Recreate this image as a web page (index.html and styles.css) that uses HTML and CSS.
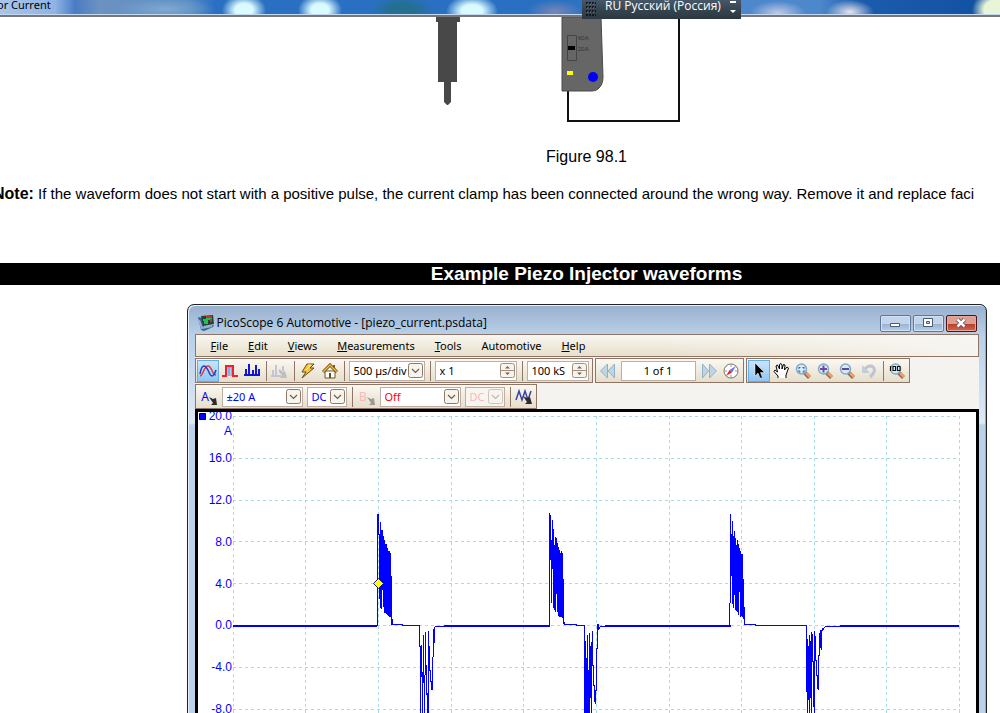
FILE: index.html
```html
<!DOCTYPE html>
<html lang="en">
<head>
<meta charset="utf-8">
<title>Piezo Injector Current</title>
<link rel="stylesheet" href="styles.css">
</head>
<body>
<header class="glass-strip"><span class="strip-title">or Current</span></header>
<div class="lang-bar">
  <svg class="grip" width="10" height="16" viewBox="0 0 10 16"><path d="M0 3h10M0 7h10M0 11h10M0 15h10" stroke="#10161c" stroke-width="2" stroke-dasharray="2 1"/><path d="M1 4h9M1 8h9M1 12h9" stroke="#7c8994" stroke-dasharray="1 2"/></svg>
  <span class="lang-name">RU Русский (Россия)</span>
  <svg width="6" height="16" viewBox="0 0 6 16"><path d="M0 1h6v2H0zM0 10h6l-3 3z" fill="#fff"/></svg>
</div>

<main class="doc">
  <figure class="diagram">
    <svg width="304" height="108" viewBox="435 17 304 108">
      <path d="M436 17h24v5h-3v60h-19V22h-2z" fill="#484848"/>
      <path d="M444 82h7v20l-3 3h-1l-3-3z" fill="#484848"/>
      <path d="M568 88v33h111V17" fill="none" stroke="#111" stroke-width="2"/>
      <path d="M562 17h39l2 60q0 8-5 12-2 2-6 2h-30z" fill="#666" stroke="#4b4b4b"/>
      <path d="M567.500 35.500h9v25h-9z" fill="none" stroke="#444"/>
      <path d="M568 46h7v4h-7z" fill="#000"/>
      <path d="M567 71h6v4h-6z" fill="#ff0"/>
      <circle cx="593" cy="77" r="5" fill="#00f"/>
      <text x="578" y="40" class="tiny">60A</text>
      <text x="578" y="51" class="tiny">20A</text>
    </svg>
    <figcaption>Figure 98.1</figcaption>
  </figure>
  <p class="note"><strong>Note:</strong> If the waveform does not start with a positive pulse, the current clamp has been connected around the wrong way. Remove it and replace faci</p>
  <h2 class="band">Example Piezo Injector waveforms</h2>

  <section class="window">
    <div class="titlebar">
      <svg class="app-icon" width="18" height="16" viewBox="0 0 18 16"><path d="M1 2l4 1 2 9 10-2-1 2-9 4-3-1z" fill="#3c5f88"/><path d="M2 5l3 8 10-2" stroke="#91b1d3" stroke-width="2" fill="none"/><path d="M4 1l12-1 1 9-11 2z" fill="#23413c"/><path d="M6 5h2v3h2V4h4v3" stroke="#23c04f" stroke-width="2" fill="none"/><path d="M9 2h6M14 4v3" stroke="#d32b2b" stroke-width="2"/></svg>
      <span class="caption">PicoScope 6 Automotive - [piezo_current.psdata]</span>
      <button class="win-btn" aria-label="Minimize"><svg width="14" height="10" viewBox="0 0 14 10"><path d="M2.500 5.500h9v3h-9z" fill="#fff" stroke="#4d5a70"/></svg></button>
      <button class="win-btn" aria-label="Restore"><svg width="14" height="10" viewBox="0 0 14 10"><path d="M2.500.5h9v8h-9zM5.500 3.500h3v2h-3z" fill="#fff" stroke="#4d5a70" fill-rule="evenodd"/></svg></button>
      <button class="win-btn close" aria-label="Close"><svg width="14" height="10" viewBox="0 0 14 10"><path d="M3.500 1.500l7 7M10.500 1.500l-7 7" stroke="#534052" stroke-width="4"/><path d="M3.500 1.500l7 7M10.500 1.500l-7 7" stroke="#fff" stroke-width="2.500"/></svg></button>
    </div>

    <nav class="menubar">
      <button><u>F</u>ile</button><button><u>E</u>dit</button><button><u>V</u>iews</button><button><u>M</u>easurements</button><button><u>T</u>ools</button><button>Automotive</button><button><u>H</u>elp</button>
    </nav>

    <div class="bars">
      <div class="bar">
        <button class="tool on" aria-label="Scope mode"><svg width="18" height="16" viewBox="0 0 18 16" fill="none" stroke-width="1.500"><path d="M1 13C4 13 5 3 9 3s4 9 8 9" stroke="#e8323c"/><path d="M1 11C2 5 3 3 5 3c4 0 5 10 8 10 2 0 3-3 4-6" stroke="#2142b5"/></svg></button>
        <button class="tool" aria-label="Persistence mode"><svg width="16" height="16" viewBox="0 0 16 16" fill="none"><path d="M5 3h5v10H5z" fill="#a3ccf2"/><path d="M7 3v10" stroke="#5f8ee0"/><path d="M0 13h4V3h7v10h5" stroke="#f2202a" stroke-width="2"/><path d="M9.500 4v9" stroke="#f58a80"/></svg></button>
        <button class="tool" aria-label="Spectrum mode"><svg width="16" height="16" viewBox="0 0 16 16"><path d="M0 12h16M2 12V6M5 12V1M9 12V7M12 12V2M15 12V6" stroke="#1414d6" stroke-width="2"/></svg></button>
        <i class="sep"></i>
        <button class="tool" aria-label="Spectrum options" disabled><svg width="17" height="16" viewBox="0 0 17 16"><path d="M0 13h10M2 13V7M5 13V2M9 9V7M12 8V3" stroke="#c3c5d6" stroke-width="2"/><path d="M8 6l4 3 2-1 2 7H9l2-3-3-3z" fill="#bebec0"/></svg></button>
        <i class="sep"></i>
        <button class="tool" aria-label="Auto setup"><svg width="16" height="16" viewBox="0 0 16 16"><path d="M7 1h7l-4 4h4L2 15l4-6H2z" fill="#f7c737" stroke="#68461c"/><path d="M8 2h3L6 7" stroke="#fff3aa" fill="none"/></svg></button>
        <button class="tool" aria-label="Home"><svg width="16" height="16" viewBox="0 0 16 16"><path d="M3 8h10v7H3z" fill="#fff" stroke="#6d5524"/><path d="M11 2h2v4h-2z" fill="#8b5a28"/><path d="M1 9l7-7 7 7" stroke="#604514" stroke-width="3" fill="none"/><path d="M1 9l7-7 7 7" stroke="#f1bd34" stroke-width="1.500" fill="none"/><path d="M7 10h2v5H7z" fill="#6b4d23"/></svg></button>
        <i class="sep"></i>
        <span class="combo w76"><select aria-label="Timebase"><option>500 µs/div</option></select><svg class="drop"><use href="#chev"/></svg></span>
        <i class="sep"></i>
        <span class="combo w82"><input aria-label="Zoom factor" value="x 1"><svg class="drop"><use href="#spin"/></svg></span>
        <i class="sep"></i>
        <span class="combo w62"><input aria-label="Number of samples" value="100 kS"><svg class="drop"><use href="#spin"/></svg></span>
      </div>
      <div class="bar">
        <button class="tool" aria-label="Previous buffer"><svg width="16" height="16" viewBox="0 0 16 16" fill="#bdd5e4" stroke="#8fb2cc"><path d="M7.500 1v14L.5 8zM14.500 1v14L8 8z"/></svg></button>
        <input class="page-box" aria-label="Buffer" value="1 of 1">
        <button class="tool" aria-label="Next buffer"><svg width="16" height="16" viewBox="0 0 16 16" fill="#bdd5e4" stroke="#8fb2cc"><path d="M1.500 1v14l6-7zM8.500 1v14l7-7z"/></svg></button>
        <button class="tool" aria-label="Buffer navigator"><svg width="16" height="16" viewBox="0 0 16 16"><circle cx="8" cy="8" r="7" fill="#fff" stroke="#707078"/><path d="M8 2v2M8 12v2M2 8h2M12 8h2" stroke="#999"/><path d="M13 3L9 9.500 6.500 7z" fill="#6674ec"/><path d="M3 13l3.500-6L9 9.500z" fill="#ee2424"/></svg></button>
      </div>
      <div class="bar">
        <button class="tool on" aria-label="Select"><svg width="16" height="16" viewBox="0 0 16 16"><path d="M4 0v13l3-3 2 5h2.500l-2-5.500h4z" fill="#000" stroke="#fff" stroke-width=".5"/></svg></button>
        <button class="tool" aria-label="Hand"><svg width="16" height="16" viewBox="0 0 16 16"><path d="M5 15v-2L1 8.500 2 7l2.500 2L3 3l1.500-1L6.500 6V1.500L8 .5l1 1.500v4l1.500-4.500L12 2l-.5 5L14 4l1.500 1-2.500 7v3" fill="#fff" stroke="#000"/></svg></button>
        <button class="tool" aria-label="Marquee zoom"><svg width="16" height="16"><use href="#lens"/><path d="M4 4.500h1.500M7.500 4.500H9M4 4v2M9 4v2M4 7v2h1.500M9 7v2H7.500" stroke="#4360a5" fill="none"/></svg></button>
        <button class="tool" aria-label="Zoom in"><svg width="16" height="16"><use href="#lens"/><path d="M3 6h7M6.500 2.500v7" stroke="#6d4a9a" stroke-width="2"/></svg></button>
        <button class="tool" aria-label="Zoom out"><svg width="16" height="16"><use href="#lens"/><path d="M3 6h7" stroke="#5b4a9a" stroke-width="2"/></svg></button>
        <button class="tool" aria-label="Undo zoom" disabled><svg width="16" height="16" viewBox="0 0 16 16"><path d="M3 7q5-6 9-3 4 4-3 10" fill="none" stroke="#bcc4d2" stroke-width="3"/><path d="M1 2v8h8z" fill="#c5ccd8"/></svg></button>
        <i class="sep"></i>
        <button class="tool" aria-label="Zoom to 100%"><svg width="16" height="16"><use href="#lens"/><path d="M1.500 3v5M4 3.500h2.500v4H4zM8.500 3.500H11v4H8.500z" stroke="#111" stroke-width="1.200" fill="#fff"/></svg></button>
      </div>
    </div>

    <div class="bars">
      <div class="bar">
        <button class="channel blue" aria-label="Channel A options">A<svg width="8" height="8"><use href="#opt"/></svg></button>
        <span class="combo w81 blue"><select aria-label="Channel A range"><option>±20 A</option></select><svg class="drop"><use href="#chev"/></svg></span>
        <span class="combo w40 blue"><select aria-label="Channel A coupling"><option>DC</option></select><svg class="drop"><use href="#chev"/></svg></span>
        <i class="sep"></i>
        <button class="channel faded" aria-label="Channel B options" disabled>B<svg width="8" height="8"><use href="#opt"/></svg></button>
        <span class="combo w81 red"><select aria-label="Channel B range"><option>Off</option></select><svg class="drop"><use href="#chev"/></svg></span>
        <span class="combo w40 faded"><select aria-label="Channel B coupling" disabled><option>DC</option></select><svg class="drop"><use href="#chev"/></svg></span>
        <i class="sep"></i>
        <button class="tool" aria-label="Math channels"><svg width="18" height="16" viewBox="0 0 18 16"><path d="M1 11L4 2l3 9 3-9 3 9 3-9" stroke="#3b41a8" stroke-width="1.500" fill="none"/><path d="M8 7l4 2 3-1 2 7h-7l2-2z" fill="#2c2c2c"/></svg></button>
      </div>
    </div>

    <div class="plot">
      <svg viewBox="198 412 778 320" class="graph" role="img" aria-label="Piezo current waveform">
        <g class="grid">
          <path d="M233 416.500h727M233 458.500h727M233 500.500h727M233 541.500h727M233 583.500h727M233 625.500h727M233 667.500h727M233 709.500h727"/>
          <path d="M233.500 416v320M305.500 416v320M378.500 416v320M451.500 416v320M523.500 416v320M596.500 416v320M669.500 416v320M741.500 416v320M814.500 416v320M886.500 416v320M959.500 416v320"/>
        </g>
        <path d="M199.500 413.500h6v6h-6z" fill="#00f" stroke="#000"/>
        <g class="axis">
          <text x="232" y="420">20.0</text><text x="232" y="435">A</text><text x="232" y="462">16.0</text><text x="232" y="504">12.0</text><text x="232" y="546">8.0</text><text x="232" y="588">4.0</text><text x="232" y="629">0.0</text><text x="232" y="671">-4.0</text><text x="232" y="713">-8.0</text>
        </g>
        <path class="base" d="M233 626h144M444 626h105M605 626h126M840 626h119"/>
        <path class="base thin" d="M393 624.500h9v1h18M564 624.500h12v1h8M745 624.500h10v1h51"/>
        <g class="trace" transform="translate(360 500) scale(.333333)">
          <path d="M52.500 378V42M55.500 42V105"/>
          <path class="solid" d="M57 102h3V66h3V90h6v18h3v12h4v12h5v13h4v7h4v7h5v69h3v130h3v18h-6l-2-24-6-4-5-6-10-5-2-66h-3v60l-5-9-1-22-3-3z"/>
          <path d="M178.500 376V440M181.500 437V650M184.500 435V530M187.500 515V640M190.500 405V550M193.500 525V640M196.500 395V525M199.500 495V585M202.500 580V650M205.500 393V650M208.500 438V512M211.500 510V545M214.500 543V570M217.500 470V570M220.500 388V470L224 380H252"/>
        </g>
        <g class="trace" transform="translate(530 500) scale(.333333)">
          <path d="M58.500 39V380M61.500 45V180M64.500 120V310M67.500 60V207M70.500 88V323M73.500 135V330M76.500 110V335M79.500 113V282M82.500 128V335M85.500 140V348M88.500 150V350M91.500 160V350M94.500 153V350M97.500 158V355M100.500 237V372M103.500 367V376"/>
          <path d="M163.500 376V650M166.500 423V650M169.500 475V650M172.500 405V650M175.500 510V650M178.500 398V650M181.500 437V595M184.500 425V650M187.500 392V497M190.500 495V557M193.500 555V605M196.500 570V612M199.500 445V572M202.500 372V447M205.500 372V390M208.500 380V388M211 380h18"/>
        </g>
        <g class="trace" transform="translate(710 500) scale(.333333)">
          <path d="M58.500 310V380M61.500 42V310M64.500 102V228M67.500 62V312M70.500 108V325M73.500 92V285M76.500 113V330M79.500 135V332M82.500 120V335M85.500 132V345M88.500 145V275M91.500 152V350M94.500 163V348M97.500 162V352M100.500 237V357M103.500 320V375"/>
          <path d="M289.500 376V575M292.500 417V650M295.500 437V600M298.500 405V650M301.500 423V593M304.500 395V650M307.500 402V487M310.500 483V620M313.500 393V650M316.500 408V483M319.500 480V527M322.500 525V567M325.500 465V570M328.500 398V467M331.500 390V445M334.500 390V450M337.500 384V392L345 380h48"/>
        </g>
        <path d="M373.500 583.500l5-5 5 5-5 5z" fill="#ff0" stroke="#1a1a80"/>
      </svg>
    </div>
  </section>
</main>

<svg class="defs" aria-hidden="true">
  <defs>
    <symbol id="chev" viewBox="0 0 15 15"><rect x=".5" y=".5" width="14" height="14" rx="2" fill="#f7f4ec" stroke="#8f7968"/><path d="M4 6l3.500 3.500L11 6" fill="none" stroke="#6d5c50" stroke-width="1.200"/></symbol>
    <symbol id="spin" viewBox="0 0 15 15"><rect x=".5" y=".5" width="14" height="14" rx="2" fill="#f7f4ec" stroke="#a18e80"/><path d="M0 7.500h15" stroke="#a18e80"/><path d="M5 5.500L7.500 3 10 5.500zM5 9.500L7.500 12 10 9.500z" fill="#75655b"/></symbol>
    <symbol id="lens" viewBox="0 0 16 16"><path d="M9.500 9.500l5 5" stroke="#7d6b72" stroke-width="4"/><path d="M11 10l4 4" stroke="#f2a159" stroke-width="2.500"/><circle cx="6.500" cy="6" r="5" fill="#d3ecfa" stroke="#85a9c9" stroke-width="1.500"/></symbol>
    <symbol id="opt" viewBox="0 0 8 8"><path d="M0 0l4 2 3-1 1 7H2l2-2z" fill="#2c2c2c"/></symbol>
  </defs>
</svg>
</body>
</html>
```
FILE: styles.css
```css
* { box-sizing: border-box; }
body { margin: 0; height: 100vh; overflow: hidden; background: #fff; color: #000; font: 16px "Liberation Sans", sans-serif; }
button, input, select { font: inherit; color: inherit; margin: 0; padding: 0; border: 0; background: none; border-radius: 0; }
svg { display: block; flex: none; }
.defs { position: absolute; width: 0; height: 0; }

.glass-strip {
  height: 17px; overflow: hidden; white-space: nowrap;
  border-bottom: 2px solid #77777b; box-shadow: inset 0 -1px #c3d9ef;
  background:
    radial-gradient(ellipse 22px 16px at 244px 10px, #d9fbff 40%, transparent),
    radial-gradient(ellipse 22px 16px at 320px 10px, #d9fbff 40%, transparent),
    radial-gradient(ellipse 32px 16px at 402px 11px, #256f91 40%, transparent),
    radial-gradient(ellipse 26px 16px at 472px 11px, #d9fbff 40%, transparent),
    radial-gradient(ellipse 28px 12px at 555px 12px, #7c86b4, transparent),
    radial-gradient(ellipse 28px 12px at 778px 13px, #c2c9e4, transparent),
    radial-gradient(ellipse 24px 12px at 850px 12px, #e9e3ec, transparent),
    radial-gradient(ellipse 24px 20px at 996px 10px, #e8f5d8 50%, transparent),
    radial-gradient(ellipse 50px 12px at 165px 9px, #7fa9cf, transparent),
    linear-gradient(90deg, #a9c5ea 0, #8fb4e4 55px, #4a7cc4 75px, #6c93c0 100px, #5388c4 190px, #2a70c2 215px, #2a70c2 560px, #4d88cc 740px, #4d88cc 820px, #1c5cac 860px, #1150a0 100%);
}
.strip-title { display: block; margin: -4px 0 0 -3px; font: 11px/18px "Noto Sans", sans-serif; }

.lang-bar {
  position: absolute; top: 0; left: 582px; display: flex; align-items: flex-start; gap: 9px;
  height: 19px; padding: 0 5px 0 4px; color: #fff; background: linear-gradient(#46576a, #37454f 50%, #2b3841);
  font: 12px/12px "Open Sans", sans-serif; white-space: nowrap;
}

.doc { margin-left: -7px; width: calc(100% + 187px); }
.diagram { margin: 0; display: flex; flex-direction: column; align-items: center; }
.diagram figcaption { margin-top: 23px; line-height: 18px; }
.tiny { font: 6px "Liberation Sans", sans-serif; fill: #333; }
.note { margin: 19px 0 60px; font-size: 15px; line-height: 18px; white-space: nowrap; }
.note strong { font-size: 16px; }
.band { margin: 0 0 19px; background: #000; color: #fff; font-size: 19px; line-height: 22px; text-align: center; }

.window {
  max-width: 800px; margin: 0 auto; padding: 0 7px; border: 1px solid #222; border-radius: 7px 7px 0 0;
  box-shadow: inset 1px 1px #e6f2fc, inset -1px 0 #53c5ea;
  background: linear-gradient(#98b0cd, #b9d0e8 30px, #dfe9f5 118px, #bcd2ea 120px);
  font: 11px/16px "Noto Sans", sans-serif;
}
.titlebar { display: flex; align-items: center; gap: 2px; height: 29px; padding: 7px 2px 0; }
.caption { flex: 1; white-space: nowrap; font: 12px/16px "Open Sans", sans-serif; }
.win-btn {
  width: 31px; height: 17px; display: grid; place-items: center; border: 1px solid #5f7798; border-radius: 2px;
  box-shadow: inset 0 0 0 1px #d3e2f2; background: linear-gradient(#c3d5ea 50%, #98b1cf 50%, #b7cee6);
}
.win-btn.close { border-color: #4c1418; box-shadow: inset 0 0 0 1px #e5a79f; background: linear-gradient(#df9c90 50%, #b93a25 50%, #cf6a55); }

.menubar {
  display: flex; height: 23px; padding-left: 5px; border: 1px solid #8e7565;
  background: linear-gradient(90deg, transparent 60%, #f7f5f1), linear-gradient(#f9f7f1, #e7dfcb);
}
.menubar button { padding: 0 10px; line-height: 20px; }

.bars { display: flex; gap: 2px; padding-top: 1px; background: #f5f3f0; }
.bar { display: flex; align-items: center; height: 25px; padding: 0 1px; border: 1px solid #8e7565; background: linear-gradient(#faf8f2, #e6decb); }
.tool { width: 22px; height: 22px; display: grid; place-items: center; }
.tool.on { border: 1px solid #62aee8; background: linear-gradient(#c8e5fb, #8ec6f5); }
.sep { width: 1px; height: 20px; margin: 0 2px 0 3px; background: #8e7565; }
.combo { position: relative; height: 20px; margin: 0 2px; border: 1px solid #bcb0a4; background: #fff; }
.combo select, .combo input { width: 100%; height: 18px; padding: 0 0 0 4px; appearance: none; line-height: 18px; display: block; color: inherit; opacity: 1; }
.drop { position: absolute; right: 1px; top: 1px; width: 15px; height: 15px; pointer-events: none; }
.w40 { width: 40px; } .w62 { width: 62px; } .w76 { width: 76px; } .w81 { width: 81px; } .w82 { width: 82px; }
.page-box { width: 75px; height: 20px; border: 1px solid #bcb0a4; background: #fff; text-align: center; margin: 0 2px; }
.channel { width: 23px; display: flex; justify-content: center; align-items: flex-end; padding-left: 2px; font-size: 12px; }
.blue { color: #00f; }
.red { color: #f00; }
.faded { color: #f7b9b9; }
.faded svg { opacity: .4; }
.combo.faded { background: #f8f5f0; }

.plot { border: 3px solid #000; border-bottom: 0; background: #fff; }
.graph { width: 100%; height: auto; }
.grid path { stroke: #add8e6; stroke-dasharray: 3 3; shape-rendering: crispEdges; fill: none; }
.axis text { font: 12px "Liberation Sans", sans-serif; fill: #00f; text-anchor: end; }
.base { stroke: #00f; stroke-width: 2; fill: none; shape-rendering: crispEdges; }
.thin { stroke-width: 1; }
.trace { stroke: #00f; stroke-width: 3; fill: none; shape-rendering: crispEdges; }
.solid { fill: #00f; stroke: none; }
```
